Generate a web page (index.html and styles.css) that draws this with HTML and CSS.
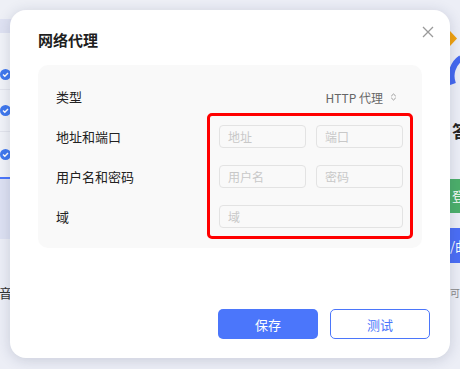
FILE: index.html
```html
<!DOCTYPE html>
<html lang="zh-CN">
<head>
    <meta charset="UTF-8">
    <meta name="viewport" content="width=device-width, initial-scale=1.0">
    <title>网络代理</title>
    <link rel="stylesheet" href="styles.css">
</head>
<body>
    <div class="app">
        <div class="side">
            <div class="side-top"></div>
            <div class="side-band"></div>
            <div class="side-list">
                <div class="side-row first"><span class="check"><svg width="11" height="11" viewBox="0 0 11 11"><path d="M3 5.6 L4.8 7.3 L8 3.9" stroke="#fff" stroke-width="1.4" fill="none"/></svg></span></div>
                <div class="side-row"><span class="check"><svg width="11" height="11" viewBox="0 0 11 11"><path d="M3 5.6 L4.8 7.3 L8 3.9" stroke="#fff" stroke-width="1.4" fill="none"/></svg></span></div>
                <div class="side-row active"><span class="check"><svg width="11" height="11" viewBox="0 0 11 11"><path d="M3 5.6 L4.8 7.3 L8 3.9" stroke="#fff" stroke-width="1.4" fill="none"/></svg></span></div>
                <div class="side-rest"></div>
            </div>
            <div class="side-note">音频</div>
        </div>
        <div class="main">
            <svg class="brand" width="40" height="60" viewBox="0 0 40 60">
                <path d="M0 4 L7 11.5 L0 19 Z" fill="#f2a20c"/>
                <path d="M11 31 A 22 22 0 0 0 3 57" stroke="#4468f0" stroke-width="6" fill="none"/>
            </svg>
            <div class="main-title">答题</div>
            <div class="btn-green">登录</div>
            <div class="btn-blue">/曲目</div>
            <div class="main-small">可工作</div>
        </div>
    </div>

    <div class="modal">
        <button class="close" aria-label="关闭">
            <svg width="12" height="12" viewBox="0 0 12 12">
                <path d="M1 1 L11 11 M11 1 L1 11" stroke="#9a9a9a" stroke-width="1.3" fill="none"/>
            </svg>
        </button>
        <h3 class="modal-title">网络代理</h3>
        <div class="panel">
            <div class="label">类型</div>
            <div class="type-value">
                HTTP 代理
                <svg width="7" height="8" viewBox="0 0 7 8">
                    <path d="M1.2 3.2 L3.5 1 L5.8 3.2 M1.2 4.8 L3.5 7 L5.8 4.8" stroke="#999" stroke-width="1" fill="none"/>
                </svg>
            </div>
            <div class="labels">
                <div class="label">地址和端口</div>
                <div class="label">用户名和密码</div>
                <div class="label">域</div>
            </div>
            <div class="highlight">
                <input class="field" placeholder="地址">
                <input class="field" placeholder="端口">
                <input class="field" placeholder="用户名">
                <input class="field" placeholder="密码">
                <input class="field wide" placeholder="域">
            </div>
        </div>
        <div class="footer">
            <button class="btn primary">保存</button>
            <button class="btn outline">测试</button>
        </div>
    </div>
</body>
</html>
```

FILE: styles.css
```css
* {
    box-sizing: border-box;
}

body {
    font-family: "Noto Sans CJK SC", "Noto Sans", sans-serif;
    background-color: #eceef6;
    margin: 0;
    padding: 0;
    width: 460px;
    height: 369px;
    overflow: hidden;
    position: relative;
}

.app {
    display: flex;
    justify-content: space-between;
    height: 369px;
}

/* background page, mostly covered by the dialog */
.side {
    width: 200px;
    display: flex;
    flex-direction: column;
}

.side-top {
    height: 19px;
    background-color: #eef0f6;
}

.side-band {
    height: 14px;
    background-color: #dfe2f2;
}

.side-list {
    background-color: #dde1f2;
    border-bottom-right-radius: 16px;
}

.side-row {
    height: 42px;
    background-color: #f1f3f8;
    border-bottom: 1px solid #e2e4ec;
    display: flex;
    align-items: center;
}

.side-row.first {
    height: 57px;
    align-items: flex-end;
    padding-bottom: 9px;
}

.side-row.active {
    height: 47px;
    border-bottom: 2px solid #4b76fb;
}

.check {
    width: 11px;
    height: 11px;
    border-radius: 50%;
    background-color: #3f78ee;
}

.check svg {
    display: block;
}

.side-rest {
    height: 60px;
}

.side-note {
    margin-top: 44px;
    margin-left: -1px;
    font-size: 13px;
    color: #333;
}

.main {
    width: 10px;
    display: flex;
    flex-direction: column;
    white-space: nowrap;
}

.brand {
    display: block;
    margin-top: 27px;
}

.main-title {
    margin-top: 31px;
    margin-left: 2px;
    font-size: 17px;
    font-weight: bold;
    color: #222;
}

.btn-green {
    margin-top: 36px;
    height: 34px;
    line-height: 34px;
    background-color: #4caf6a;
    color: #fff;
    font-size: 13px;
    padding-left: 2px;
}

.btn-blue {
    margin-top: 15px;
    height: 35px;
    line-height: 35px;
    background-color: #4b6ef5;
    color: #fff;
    font-size: 13px;
}

.main-small {
    margin-top: 22px;
    font-size: 10px;
    color: #888;
}

/* dialog */
.modal {
    position: absolute;
    left: 10px;
    top: 10px;
    width: 440px;
    height: 348px;
    background-color: #fff;
    border-radius: 16px;
    box-shadow: 0 2px 14px rgba(40, 50, 90, 0.18);
    padding: 20px 28px 19px 28px;
    display: flex;
    flex-direction: column;
}

.close {
    position: absolute;
    top: 16px;
    right: 16px;
    border: none;
    background: none;
    padding: 0;
    width: 12px;
    height: 12px;
    cursor: pointer;
}

.close svg {
    display: block;
}

.modal-title {
    margin: 0;
    font-size: 15px;
    line-height: 20px;
    font-weight: bold;
    color: #1f1f1f;
}

.panel {
    margin-top: 15px;
    background-color: #f9f9f9;
    border-radius: 10px;
    padding: 12px 19px 11px 18px;
    display: grid;
    grid-template-columns: 163px 1fr;
}

.label {
    height: 40px;
    line-height: 40px;
    font-size: 13px;
    color: #222;
}

.type-value {
    height: 40px;
    display: flex;
    align-items: center;
    justify-content: flex-end;
    gap: 7px;
    padding-right: 6px;
    font-size: 12px;
    color: #666;
}

.type-value svg {
    display: block;
}

.highlight {
    margin: -4px -10px -2px -12px;
    border: 3px solid #ff0000;
    border-radius: 5px;
    padding: 9px 7px 8px 9px;
    display: grid;
    grid-template-columns: 1fr 1fr;
    column-gap: 10px;
    row-gap: 17px;
}

.field {
    height: 23px;
    width: 100%;
    border: 1px solid #e3e3e3;
    border-radius: 4px;
    background-color: #f9f9f9;
    padding: 0 8px;
    font-family: inherit;
    font-size: 12px;
    color: #333;
    outline: none;
}

.field::placeholder {
    color: #c8c8c8;
}

.field.wide {
    grid-column: 1 / 3;
}

.footer {
    margin-top: auto;
    margin-right: -8px;
    display: flex;
    justify-content: flex-end;
    gap: 12px;
}

.btn {
    width: 100px;
    height: 30px;
    border-radius: 5px;
    font-family: inherit;
    font-size: 13px;
    cursor: pointer;
}

.btn.primary {
    border: none;
    background-color: #4b76fb;
    color: #fff;
}

.btn.outline {
    border: 1px solid #4b76fb;
    background-color: #fff;
    color: #4b76fb;
}
```
